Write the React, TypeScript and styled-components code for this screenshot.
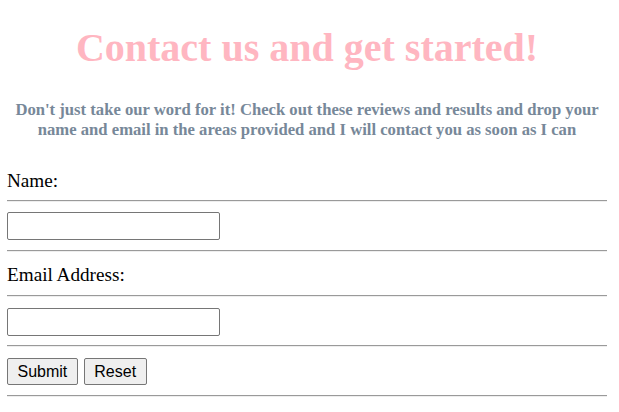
import React from "react";
import styled, { createGlobalStyle } from "styled-components";

const Global = createGlobalStyle`
  html, body { margin: 0; padding: 0; background: #ffffff; }
  body { font-family: "Liberation Serif", "Times New Roman", serif; color: #000; }
`;

const Page = styled.main`
  width: 600px;
  margin: 0 0 0 7px;
  display: flex;
  flex-direction: column;
`;

const Title = styled.h1`
  margin: 25px 0 0;
  text-align: center;
  font-size: 40px;
  line-height: 46px;
  font-weight: bold;
  color: #ffb6c1;
`;

const Lead = styled.h4`
  margin: 29px 0 0;
  text-align: center;
  font-size: 16.65px;
  line-height: 20px;
  font-weight: bold;
  color: #778899;
`;

const Form = styled.form`
  display: flex;
  flex-direction: column;
  margin-top: 30px;
`;

const Label = styled.label`
  display: block;
  font-size: 19.2px;
  line-height: 22px;
`;

const Rule = styled.hr`
  margin: 0;
  height: 0;
  border: none;
  border-top: 1px solid #9a9a9a;
  border-bottom: 1px solid #eeeeee;
`;

const Row = styled.div<{ $top: number; $bottom: number }>`
  display: flex;
  gap: 6px;
  margin: ${(p) => `${p.$top}px 0 ${p.$bottom}px`};
`;

const TextInput = styled.input`
  box-sizing: border-box;
  width: 213px;
  height: 28px;
  border: 1px solid #767676;
  border-radius: 2px;
  background: #fff;
  padding: 1px 2px;
  font-size: 16px;
`;

const Button = styled.button`
  box-sizing: border-box;
  height: 27px;
  padding: 0 9.5px;
  border: 1px solid #767676;
  border-radius: 2px;
  background: #efefef;
  color: #000;
  font-family: "Liberation Sans", Arial, sans-serif;
  font-size: 16px;
`;

const LabelWrap = styled.div<{ $top: number; $bottom: number }>`
  margin: ${(p) => `${p.$top}px 0 ${p.$bottom}px`};
`;

export default function App() {
  return (
    <>
      <Global />
      <Page>
        <Title>Contact us and get started!</Title>
        <Lead>
          Don't just take our word for it! Check out these reviews and results and drop your
          name and email in the areas provided and I will contact you as soon as I can
        </Lead>
        <Form onSubmit={(e) => e.preventDefault()}>
          <LabelWrap $top={0} $bottom={8}>
            <Label htmlFor="name">Name:</Label>
          </LabelWrap>
          <Rule />
          <Row $top={10} $bottom={10}>
            <TextInput id="name" type="text" />
          </Row>
          <Rule />
          <LabelWrap $top={12} $bottom={9}>
            <Label htmlFor="email">Email Address:</Label>
          </LabelWrap>
          <Rule />
          <Row $top={11} $bottom={9}>
            <TextInput id="email" type="text" />
          </Row>
          <Rule />
          <Row $top={11} $bottom={10}>
            <Button type="submit">Submit</Button>
            <Button type="reset">Reset</Button>
          </Row>
          <Rule />
        </Form>
      </Page>
    </>
  );
}
